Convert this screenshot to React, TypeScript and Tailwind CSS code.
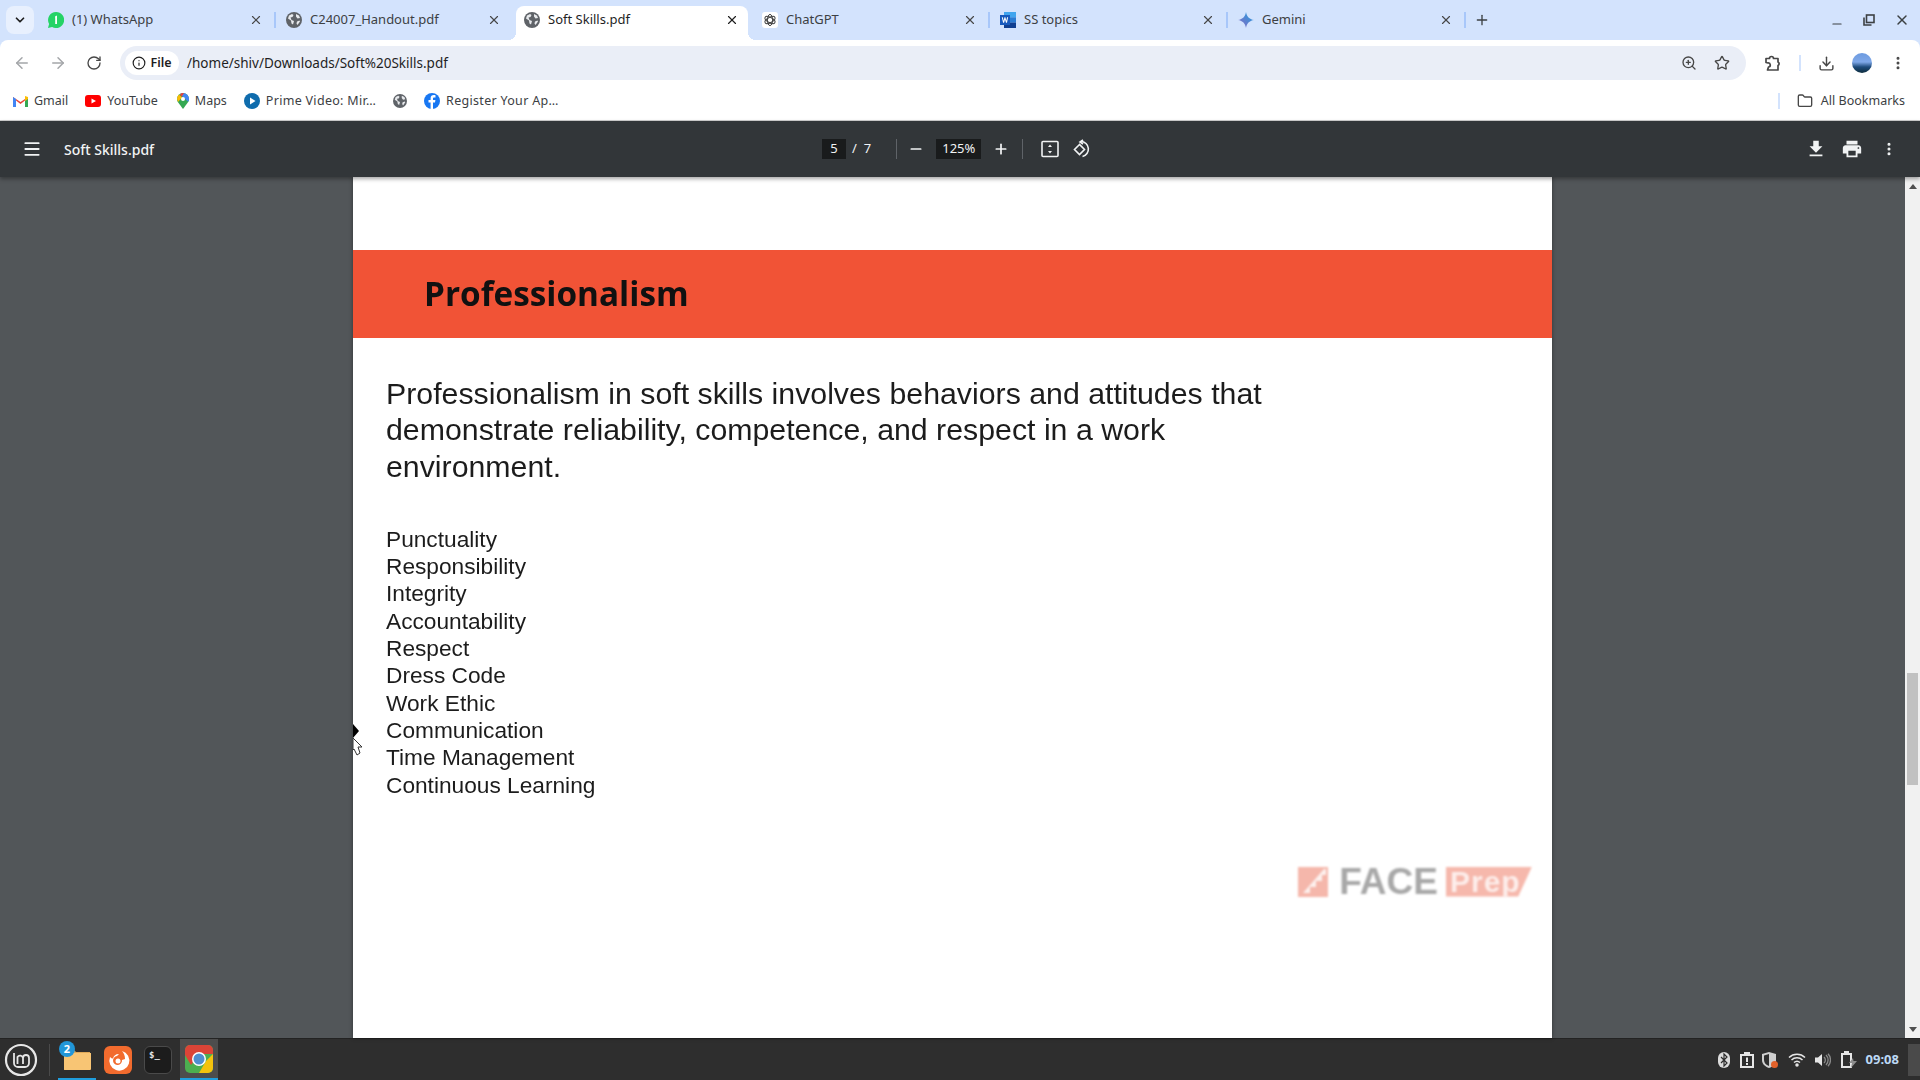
import { ArrowLeft, ArrowRight, ChevronDown, Download, Folder, Info, Menu, Minus, MoreVertical, Plus, RotateCw, Star, X, ZoomIn } from 'lucide-react'

const uiFont = "font-['Noto_Sans','Open_Sans',sans-serif]"

const Globe = ({ size = 16 }: { size?: number }) => (
  <svg width={size} height={size} viewBox="0 0 16 16" className="shrink-0">
    <circle cx="8" cy="8" r="8" fill="#5f6368" />
    <path d="M3 3.500l3-1.500 1.500 1-1 2-2 .5 1 2.500 2.500 1-1 3.500-1.500-1-.5-3L2 6.500zM10 2l3 1.500 1 2.500-2.500.5L10 4.500zM11 9.500l2.500-1 .5 1-2.500 3.500-1-1.500z" fill="#e8eaed" />
  </svg>
)

const WhatsApp = () => (
  <svg width="16" height="16" viewBox="0 0 16 16" className="shrink-0">
    <path d="M8 0a8 8 0 0 0-6.900 12L0 16l4.100-1.100A8 8 0 1 0 8 0z" fill="#25d366" />
    <path d="M7 4.500l2-1V12H7.200V6z" fill="#fff" />
  </svg>
)

const ChatGPT = () => (
  <svg width="16" height="16" viewBox="0 0 16 16" className="shrink-0 rounded-[3px] bg-white">
    <g fill="none" stroke="#444" strokeWidth="1">
      <ellipse cx="8" cy="8" rx="2.600" ry="5.600" />
      <ellipse cx="8" cy="8" rx="2.600" ry="5.600" transform="rotate(60 8 8)" />
      <ellipse cx="8" cy="8" rx="2.600" ry="5.600" transform="rotate(120 8 8)" />
    </g>
  </svg>
)

const Word = () => (
  <svg width="16" height="16" viewBox="0 0 16 16" className="shrink-0">
    <rect x="4" width="12" height="5.400" fill="#41a5ee" />
    <rect x="4" y="5.300" width="12" height="5.400" fill="#2b7cd3" />
    <rect x="4" y="10.600" width="12" height="5.400" fill="#103f91" />
    <rect y="3" width="10" height="10" fill="#185abd" />
    <path d="M1.800 5.200h1l.8 3.600.9-3.600h.9l.9 3.600.8-3.600h1L7 10.800H6L5 7.400l-.9 3.400h-1z" fill="#fff" />
  </svg>
)

const Gemini = () => (
  <svg width="16" height="16" viewBox="0 0 16 16" className="shrink-0">
    <defs>
      <linearGradient id="gem" x1="0" y1="1" x2="1" y2="0">
        <stop offset="0" stopColor="#9168c0" />
        <stop offset="0.5" stopColor="#5684d1" />
        <stop offset="1" stopColor="#1ba1e3" />
      </linearGradient>
    </defs>
    <path d="M8 0c.6 4.400 3.400 7.400 8 8-4.600.6-7.400 3.600-8 8-.6-4.400-3.400-7.400-8-8 4.600-.6 7.400-3.600 8-8z" fill="url(#gem)" />
  </svg>
)

const tabs = [
  { icon: <WhatsApp />, title: '(1) WhatsApp' },
  { icon: <Globe />, title: 'C24007_Handout.pdf' },
  { icon: <Globe />, title: 'Soft Skills.pdf', active: true },
  { icon: <ChatGPT />, title: 'ChatGPT' },
  { icon: <Word />, title: 'SS topics' },
  { icon: <Gemini />, title: 'Gemini' },
]

const skills = [
  'Punctuality',
  'Responsibility',
  'Integrity',
  'Accountability',
  'Respect',
  'Dress Code',
  'Work Ethic',
  'Communication',
  'Time Management',
  'Continuous Learning',
]

const Tab = ({ icon, title, active, hideSep }: { icon: React.ReactNode; title: string; active?: boolean; hideSep?: boolean }) => (
  <div className="flex h-[34px] w-[238px] shrink-0 items-center">
    <div className={`relative flex h-full w-[232px] items-center gap-2 rounded-t-lg pb-[6px] pl-2 pr-2 ${active ? 'bg-white' : ''}`}>
      {active && <div className="absolute bottom-0 -left-2 h-2 w-2 bg-[radial-gradient(circle_at_0_0,transparent_8px,#fff_8px)]" />}
      {active && <div className="absolute bottom-0 -right-2 h-2 w-2 bg-[radial-gradient(circle_at_100%_0,transparent_8px,#fff_8px)]" />}
      {icon}
      <span className={`flex-1 truncate text-[13px] ${active ? 'text-[#1f1f1f]' : 'text-[#3c4043]'}`}>{title}</span>
      <X size={14} strokeWidth={2} className={`mr-[1px] ${active ? 'text-[#1f1f1f]' : 'text-[#474747]'}`} />
    </div>
    <div className={`mb-[6px] ml-[2px] h-4 w-[2px] ${hideSep ? '' : 'bg-[#a8c7fa]'}`} />
  </div>
)

const Bookmark = ({ icon, label, className, wide }: { icon: React.ReactNode; label?: string; className?: string; wide?: boolean }) => (
  <div className={`flex items-center gap-[6px] ${className ?? ''}`}>
    {icon}
    {label && <span className={`text-[12.5px] text-[#3c4043] ${wide ? 'tracking-[0.3px]' : ''}`}>{label}</span>}
  </div>
)

const FitPage = () => (
  <svg width="20" height="20" viewBox="0 0 20 20" fill="none" stroke="#f1f3f4" strokeWidth="1.600">
    <rect x="2" y="2.500" width="16" height="15" rx="1" />
    <path d="M10 5.500l-2 2.500h4zM10 14.500l-2-2.500h4z" fill="#f1f3f4" stroke="none" />
  </svg>
)

const RotatePage = () => (
  <svg width="20" height="20" viewBox="0 0 20 20" fill="none" stroke="#f1f3f4" strokeWidth="1.600">
    <path d="M8.500 5.500l-5 5 5 5 5-5z" />
    <path d="M10 2.500a7.600 7.600 0 0 1 1.500 15" />
    <path d="M12 .8L9 3l3 2" />
  </svg>
)

const Extensions = () => (
  <svg width="18" height="18" viewBox="0 0 18 18" fill="none" stroke="#474747" strokeWidth="1.700" strokeLinejoin="round">
    <path d="M2 4.500h3.500a2 2 0 0 1 4 0H14v3.500a2 2 0 0 1 0 3.600V16H3.500L4.500 13a2 2 0 0 0-.5-4L2 8.500z" />
  </svg>
)

const Cursor = () => (
  <svg width="14" height="34" viewBox="0 0 14 34" className="absolute left-0 top-[546px]">
    <path d="M0 1l6 7-6 7z" fill="#000" />
    <path d="M0 15l9 9H5l2 6-3 2-3-6-1 1z" fill="#fff" stroke="#333" strokeWidth="1" />
  </svg>
)

const FacePrep = () => (
  <div className="absolute right-[20px] top-[686px] flex items-center blur-[0.8px]">
    <svg width="30" height="30" viewBox="0 0 30 30">
      <path d="M0 0h30v30H0z" fill="#f5b7ab" />
      <path d="M26 2L5 26h7v-6h6v-6h6V8h4V2z" fill="#fff" opacity="0.8" />
    </svg>
    <span className="ml-[11px] font-['Liberation_Sans',sans-serif] text-[37px] font-bold leading-none text-[#a8a8a8]">FACE</span>
    <div className="ml-[8px] flex h-[30px] w-[86px] items-center bg-[#f6b8ac] pl-[4px] [clip-path:polygon(0_0,100%_0,84%_100%,0_100%)]">
      <span className="font-['Liberation_Sans',sans-serif] text-[30px] font-bold leading-none tracking-[1px] text-[#fdeeeb]">Prep</span>
    </div>
  </div>
)

const Tray = () => (
  <div className="flex items-center text-[#e6e6e6]">
    <svg width="12" height="16" viewBox="0 0 12 16"><rect width="12" height="16" rx="6" fill="#dcdcdc" /><path d="M3 5l6 6-3 3V2l3 3-6 6" fill="none" stroke="#2e2e2e" strokeWidth="1.200" /></svg>
    <svg width="14" height="16" viewBox="0 0 14 16" className="ml-[10px]"><path d="M0 2h4V0h6v2h4v14H0z" fill="#e6e6e6" /><rect x="2" y="4" width="10" height="10" fill="#2e2e2e" /><path d="M6 5.500h2v4.500H6zM6 11h2v2H6z" fill="#e6e6e6" /></svg>
    <svg width="18" height="18" viewBox="0 0 18 18" className="ml-[7px]"><path d="M8 1l7 2v6c0 4-3 6.500-7 8-4-1.500-7-4-7-8V3z" fill="#cfcfcf" /><path d="M8 3v12c-3-1-5-3-5-6V4.500z" fill="#2e2e2e" /><circle cx="13.500" cy="13.500" r="3.500" fill="#e2622b" /></svg>
    <svg width="18" height="14" viewBox="0 0 18 14" fill="none" stroke="#e6e6e6" strokeWidth="1.500" className="ml-[9px]"><path d="M1 4.500a11.500 11.500 0 0 1 16 0M3.500 7a8 8 0 0 1 11 0M6 9.500a4.500 4.500 0 0 1 6 0" /><circle cx="9" cy="12" r="1" fill="#e6e6e6" /></svg>
    <svg width="16" height="14" viewBox="0 0 16 14" fill="none" className="ml-[9px]"><path d="M0 4.500h3L7 1v12L3 9.500H0z" fill="#e6e6e6" /><path d="M9 4a4 4 0 0 1 0 6M11 2a7 7 0 0 1 0 10M13 .8a9 9 0 0 1 0 12.400" stroke="#8a8a8a" strokeWidth="1.300" /></svg>
    <svg width="16" height="17" viewBox="0 0 16 17" className="ml-[10px]"><path d="M0 2h3V0h5v2h3v15H0z" fill="#e6e6e6" /><rect x="2" y="4" width="7" height="11" fill="#2e2e2e" /><path d="M12 7l-4 5h3l-1 5 6-7h-3.500z" fill="#8d8d8d" /></svg>
    <span className="ml-[9px] text-[13px] font-bold text-[#bcd8f5]">09:08</span>
  </div>
)

export default function App() {
  return (
    <div className={`flex h-[1080px] w-[1920px] flex-col overflow-hidden bg-[#d3e3fd] ${uiFont}`}>
      {/* tab strip */}
      <div className="flex h-10 shrink-0 items-end">
        <div className="mb-[6px] ml-[6px] mr-[6px] flex h-7 w-7 shrink-0 items-center justify-center rounded-lg bg-[#e8f0fe]">
          <ChevronDown size={14} strokeWidth={3} className="text-[#1f1f1f]" />
        </div>
        {tabs.map((t, i) => (
          <Tab key={t.title} icon={t.icon} title={t.title} active={t.active} hideSep={i === 1 || i === 2} />
        ))}
        <Plus size={16} strokeWidth={2} className="mb-[12px] ml-[6px] text-[#3c4043]" />
        <div className="mb-[9px] ml-auto flex items-center gap-[19px] pr-[10px] text-[#3c4043]">
          <Minus size={14} strokeWidth={2} className="mt-[8px]" />
          <svg width="12" height="12" viewBox="0 0 12 12" fill="none" stroke="#3c4043" strokeWidth="1.600">
            <rect x="3.500" y="1" width="7.500" height="7.500" />
            <path d="M1 3.500V11h7.500" />
          </svg>
          <X size={16} strokeWidth={2.200} />
        </div>
      </div>

      {/* address bar row */}
      <div className="flex h-10 shrink-0 items-end rounded-t-lg bg-white">
        <div className="flex h-[34px] w-[120px] shrink-0 items-center text-[#5f6368]">
          <ArrowLeft size={18} className="ml-[13px] text-[#a4a6a9]" />
          <ArrowRight size={18} className="ml-[18px] text-[#a4a6a9]" />
          <RotateCw size={16} strokeWidth={2} className="ml-[19px] text-[#474747]" />
        </div>
        <div className="flex h-[34px] w-[1626px] shrink-0 items-center rounded-full bg-[#eaeef7] pl-[5px] pr-[16px]">
          <div className="flex h-6 w-[54px] items-center justify-center gap-1 rounded-full bg-white">
            <Info size={14} strokeWidth={2} className="text-[#1f1f1f]" />
            <span className="text-[12.5px] font-semibold text-[#1f1f1f]">File</span>
          </div>
          <span className="ml-[8px] text-[13.5px] text-[#1f1f1f]">/home/shiv/Downloads/Soft%20Skills.pdf</span>
          <ZoomIn size={16} strokeWidth={2} className="ml-auto text-[#474747]" />
          <Star size={16} strokeWidth={2} className="ml-[17px] text-[#474747]" />
        </div>
        <div className="flex h-[34px] flex-1 items-center text-[#474747]">
          <div className="ml-[18px]"><Extensions /></div>
          <div className="ml-[17px] h-4 w-[2px] bg-[#d3e3fd]" />
          <Download size={17} strokeWidth={2} className="ml-[17px]" />
          <div className="ml-[17px] h-5 w-5 rounded-full bg-[linear-gradient(180deg,#6d9be0_0%,#7fa8e8_45%,#1d4a7a_70%,#0f2e3e_100%)]" />
          <MoreVertical size={16} strokeWidth={2.500} className="ml-[18px]" />
        </div>
      </div>

      {/* bookmarks */}
      <div className="flex h-[41px] shrink-0 items-center border-b border-[#d0d0d0] bg-white pt-[2px]">
        <Bookmark
          className="ml-[13px]"
          label="Gmail"
          icon={
            <svg width="15" height="12" viewBox="0 0 15 12">
              <path d="M0 2l7.500 5L15 2v10h-3V5.500L7.500 9 3 5.500V12H0z" fill="#ea4335" />
              <path d="M0 2v10h3V4z" fill="#4285f4" />
              <path d="M15 2v10h-3V4z" fill="#34a853" />
              <path d="M12 1l3 1v2l-3 2z" fill="#fbbc04" />
            </svg>
          }
        />
        <Bookmark
          className="ml-[17px]"
          label="YouTube"
          icon={
            <svg width="16" height="12" viewBox="0 0 16 12">
              <rect width="16" height="12" rx="3" fill="#ff0000" />
              <path d="M6.500 3.500L11 6l-4.500 2.500z" fill="#fff" />
            </svg>
          }
        />
        <Bookmark
          className="ml-[19px]"
          label="Maps"
          icon={
            <svg width="12" height="16" viewBox="0 0 12 16">
              <path d="M6 0a6 6 0 0 0-6 6c0 1.500.5 2.500 1.200 3.500L6 16l4.800-6.500C11.500 8.500 12 7.500 12 6a6 6 0 0 0-6-6z" fill="#34a853" />
              <path d="M6 0a6 6 0 0 1 6 6c0 1-.3 2-.8 2.700L3 1z" fill="#4285f4" />
              <path d="M0 6a6 6 0 0 1 2-4.400l3 3L1 9z" fill="#fbbc04" />
              <circle cx="6" cy="6" r="2" fill="#fff" />
              <path d="M3 1.200A6 6 0 0 1 7 0L4.500 4z" fill="#ea4335" />
            </svg>
          }
        />
        <Bookmark
          className="ml-[17px]"
          wide
          label="Prime Video: Mir…"
          icon={
            <svg width="16" height="16" viewBox="0 0 16 16">
              <circle cx="8" cy="8" r="8" fill="#0f6cad" />
              <path d="M6 4.500L11.500 8 6 11.500z" fill="#fff" />
            </svg>
          }
        />
        <div className="ml-[17px]"><Globe size={14} /></div>
        <Bookmark
          className="ml-[17px]"
          wide
          label="Register Your Ap…"
          icon={
            <svg width="16" height="16" viewBox="0 0 16 16">
              <circle cx="8" cy="8" r="8" fill="#1877f2" />
              <path d="M9 16V9.500h2l.4-2.500H9V5.700c0-.8.3-1.200 1.300-1.200h1.200V2.300C11 2.200 10.400 2.100 9.800 2.100 7.900 2.100 6.600 3.200 6.600 5.300V7H4.500v2.500h2.100V16z" fill="#fff" />
            </svg>
          }
        />
        <div className="ml-auto h-4 w-[2px] bg-[#d3e3fd]" />
        <Folder size={16} strokeWidth={2} className="ml-[17px] text-[#474747]" />
        <span className="ml-[8px] mr-[15px] text-[12.5px] text-[#3c4043]">All Bookmarks</span>
      </div>

      {/* pdf toolbar */}
      <div className="z-10 flex h-14 shrink-0 items-center bg-[#323639] text-[#f1f3f4] shadow-[0_2px_4px_rgba(0,0,0,0.35)]">
        <Menu size={20} strokeWidth={2.200} className="ml-[22px]" />
        <span className="ml-[22px] w-[200px] text-[14px] font-medium">Soft Skills.pdf</span>
        <div className="ml-[558px] flex h-5 w-6 items-center justify-center bg-[#191b1c] text-[13px]">5</div>
        <span className="ml-[6px] text-[13px]">/</span>
        <span className="ml-[7px] text-[13px]">7</span>
        <div className="ml-[25px] h-5 w-px bg-[#5f6368]" />
        <Minus size={16} strokeWidth={2.600} className="ml-[11px]" />
        <div className="ml-[12px] flex h-5 w-[45px] items-center justify-center bg-[#191b1c] text-[13px]">125%</div>
        <Plus size={16} strokeWidth={2.600} className="ml-[12px]" />
        <div className="ml-[13px] h-5 w-px bg-[#5f6368]" />
        <div className="ml-[17px]"><FitPage /></div>
        <div className="ml-[11px]"><RotatePage /></div>
        <svg width="22" height="22" viewBox="0 0 24 24" fill="#f1f3f4" className="ml-[714px]">
          <path d="M19 9h-4V3H9v6H5l7 7 7-7zM5 18v2h14v-2H5z" />
        </svg>
        <svg width="22" height="22" viewBox="0 0 24 24" fill="#f1f3f4" className="ml-[14px]">
          <path d="M19 8H5c-1.660 0-3 1.340-3 3v6h4v4h12v-4h4v-6c0-1.660-1.340-3-3-3zm-3 11H8v-5h8v5zm3-7c-.55 0-1-.45-1-1s.45-1 1-1 1 .45 1 1-.45 1-1 1zm-1-9H6v4h12V3z" />
        </svg>
        <MoreVertical size={16} strokeWidth={2.600} className="ml-[18px]" />
      </div>

      {/* viewer */}
      <div className="flex min-h-0 flex-1 bg-[#525659]">
        <div className="w-[353px] shrink-0" />
        <div className="relative w-[1199px] shrink-0 bg-white shadow-[0_0_4px_rgba(0,0,0,0.4)]">
          <div className="mt-[73px] flex h-[88px] items-center bg-[#f15336] pl-[71px] blur-[0.4px]">
            <span className="font-['Open_Sans',sans-serif] text-[33.3px] font-bold text-[#111]">Professionalism</span>
          </div>
          <p className="mt-[38px] w-[960px] pl-[33px] font-['Liberation_Sans',sans-serif] text-[30.3px] leading-[36.3px] text-[#1c1c1c] blur-[0.4px]">
            Professionalism in soft skills involves behaviors and attitudes that demonstrate reliability, competence, and respect in a work environment.
          </p>
          <ul className="mt-[41px] pl-[33px] font-['Liberation_Sans',sans-serif] text-[22.7px] leading-[27.3px] text-[#1c1c1c] blur-[0.4px]">
            {skills.map(s => (
              <li key={s}>{s}</li>
            ))}
          </ul>
          <FacePrep />
          <Cursor />
        </div>
        <div className="flex-1" />
        <div className="relative w-[15px] shrink-0 bg-[#f1f1f1]">
          <div className="flex h-[18px] items-center justify-center">
            <div className="h-0 w-0 border-x-[4px] border-b-[5px] border-x-transparent border-b-[#505050]" />
          </div>
          <div className="absolute left-[2px] top-[496px] h-[112px] w-[11px] bg-[#c1c1c1]" />
          <div className="absolute bottom-0 flex h-[18px] w-full items-center justify-center">
            <div className="h-0 w-0 border-x-[4px] border-t-[5px] border-x-transparent border-t-[#505050]" />
          </div>
        </div>
      </div>

      {/* taskbar */}
      <div className="flex h-[42px] shrink-0 items-center border-t border-[#232323] bg-[#2e2e2e]">
        <svg width="34" height="34" viewBox="0 0 34 34" fill="none" stroke="#e6e6e6" className="ml-[4px] shrink-0">
          <circle cx="17" cy="17" r="15" strokeWidth="2.200" />
          <path d="M10 10v10a4 4 0 0 0 4 4h7a4 4 0 0 0 4-4v-5a3 3 0 0 0-6 0v6M19 15a3 3 0 0 0-5.500-1v7" strokeWidth="1.800" />
        </svg>
        <div className="ml-[11px] h-8 w-px bg-[#4a4a4a]" />
        <div className="relative ml-[8px] flex h-[41px] w-[38px] items-center justify-center border-b-2 border-[#1f9ede]">
          <svg width="28" height="24" viewBox="0 0 28 24">
            <path d="M1 3h10l2 2h14v18H1z" fill="#e0a958" />
            <path d="M1 6h27v16a1 1 0 0 1-1 1H2a1 1 0 0 1-1-1z" fill="#f8c574" />
          </svg>
          <div className="absolute left-[1px] top-[2px] flex h-4 w-4 items-center justify-center rounded-full bg-[#2196d8] text-[11px] font-bold text-white">2</div>
        </div>
        <div className="ml-[3px] flex h-[41px] w-[38px] items-center justify-center">
          <svg width="28" height="28" viewBox="0 0 28 28">
            <rect width="28" height="28" rx="6" fill="#f26b2e" />
            <path d="M18 5a10 10 0 1 1-12 6c1 1 2 1.500 3 1.500A6 6 0 0 1 15 8l-2 2a4.500 4.500 0 1 0 5 4l3-1c0-3-1-6-3-8z" fill="#fff" />
            <circle cx="14" cy="15" r="2.500" fill="#fff" />
          </svg>
        </div>
        <div className="ml-[2px] flex h-[41px] w-[38px] items-center justify-center">
          <div className="flex h-[28px] w-[28px] items-start rounded-md border border-[#4a4a4a] bg-[#1c1c1c] pl-[4px] font-['DejaVu_Sans_Mono',monospace] text-[9px] font-bold leading-[16px] text-[#e6e6e6]">$_</div>
        </div>
        <div className="ml-[3px] flex h-[41px] w-[38px] items-center justify-center border-b-2 border-[#1f9ede] bg-[#4d4d4d]">
          <svg width="28" height="28" viewBox="0 0 28 28">
            <rect width="28" height="28" rx="5" fill="#4caf50" />
            <path d="M0 5a5 5 0 0 1 5-5h18a5 5 0 0 1 5 5v4H14L6 20 0 10z" fill="#db4437" />
            <path d="M28 9v14a5 5 0 0 1-5 5h-9l7-12z" fill="#f4c20d" />
            <circle cx="14" cy="14" r="7" fill="#fff" />
            <circle cx="14" cy="14" r="5.500" fill="#4f8fd0" />
          </svg>
        </div>
        <div className="ml-auto mr-[9px]"><Tray /></div>
        <div className="h-[32px] w-[12px] bg-[#4a4a4a]" />
      </div>
    </div>
  )
}
